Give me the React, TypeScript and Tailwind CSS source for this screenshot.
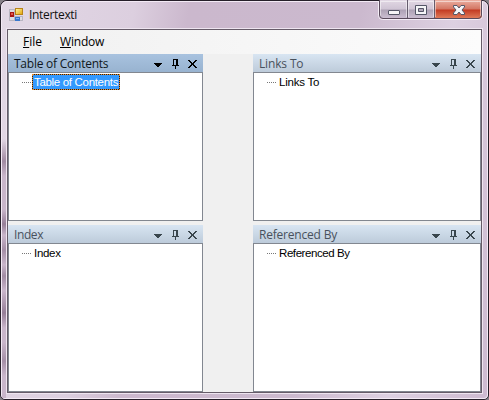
import React from "react";

type PaneProps = { title: string; node: string; active?: boolean; titleStyle: string; nodeStyle: string };

function PaneIcons({ active }: { active?: boolean }) {
  return (
    <svg width="45" height="18" viewBox="0 0 45 18" shapeRendering="crispEdges" className={active ? "text-black" : "text-[#39464d]"} fill="currentColor">
      <path d="M0 9h8v1H0zM1 10h6v1H1zM2 11h4v1H2zM3 12h2v1H3z" />
      <path d="M19 5h5v1h-5zM19 5h1v6h-1zM22 5h2v6h-2zM18 11h7v1h-7zM21 12h1v3h-1z" />
      <path d="M34 6h2v1h-2zM41 6h2v1h-2zM35 7h2v1h-2zM40 7h2v1h-2zM36 8h2v1h-2zM39 8h2v1h-2zM37 9h3v2h-3zM36 11h2v1h-2zM39 11h2v1h-2zM35 12h2v1h-2zM40 12h2v1h-2zM34 13h2v1h-2zM41 13h2v1h-2z" />
    </svg>
  );
}

function Pane({ title, node, active, titleStyle, nodeStyle }: PaneProps) {
  return (
    <section className="flex min-h-0 flex-1 flex-col">
      <header className={`flex h-[18px] shrink-0 items-center justify-between pl-1.5 pr-1 ${active ? "bg-linear-to-b from-[#a8c2df] to-[#98b3d0] text-[#101820]" : "bg-linear-to-b from-[#d8e5f2] to-[#bdcbda] text-[#48515d]"}`}>
        <span className={`whitespace-nowrap text-[12px] leading-[19px] ${titleStyle}`}>{title}</span>
        <PaneIcons active={active} />
      </header>
      <div className="flex flex-1 items-start border border-[#828790] bg-white pl-[13px] pt-px">
        <span className="mt-2 h-px w-[10px] bg-[repeating-linear-gradient(90deg,#777_0px,#777_1px,transparent_1px,transparent_2px)]" />
        <span className={`h-4 whitespace-nowrap border border-dotted px-px font-['Liberation_Sans',Arial,sans-serif] text-[11.5px] leading-[15px] ${nodeStyle} ${active ? "w-[88px] border-[#e58a2c] text-white [background:linear-gradient(#3399ff,#3399ff)_padding-box,linear-gradient(#222,#222)_border-box]" : "border-transparent text-black"}`}>{node}</span>
      </div>
    </section>
  );
}

function AppIcon() {
  return (
    <svg width="15" height="15" viewBox="0 0 15 15" shapeRendering="crispEdges">
      <defs>
        <linearGradient id="gold" x2="1" y2="1"><stop stopColor="#fff3a0" /><stop offset="1" stopColor="#e3a80e" /></linearGradient>
      </defs>
      <path d="M.5 2.5h5v11h-5zM5.500 9.500h8v4h-8z" fill="#dedce2" stroke="#b9b6c2" />
      <rect x="1" y="5" width="4" height="5" fill="#a91714" />
      <rect x="2" y="6" width="2" height="2" fill="#e15b49" />
      <rect x="6" y="1" width="8" height="7" fill="#b98317" />
      <rect x="7" y="2" width="6" height="5" fill="url(#gold)" />
      <rect x="6" y="10" width="5" height="4" fill="#3978cd" />
      <rect x="7" y="11" width="3" height="1" fill="#81b2f0" />
    </svg>
  );
}

function WindowButtons() {
  return (
    <svg width="105" height="21" viewBox="0 0 105 21">
      <defs>
        <linearGradient id="glass" x2="0" y2="1"><stop stopColor="#e2d8e4" /><stop offset=".48" stopColor="#cfc4d4" /><stop offset=".52" stopColor="#ada1b4" /><stop offset="1" stopColor="#cfc1d5" /></linearGradient>
        <linearGradient id="close" x2="0" y2="1"><stop stopColor="#ebb0a2" /><stop offset=".48" stopColor="#d37562" /><stop offset=".52" stopColor="#c23a22" /><stop offset="1" stopColor="#e3825f" /></linearGradient>
        <clipPath id="rounded"><path d="M1 0h103v15q0 4-4 4H5q-4 0-4-4z" /></clipPath>
      </defs>
      <path d="M.5 1v14.500q0 4 4 4h96q4 0 4-4V1" fill="none" stroke="#f4edf6" />
      <g clipPath="url(#rounded)">
        <path d="M1 0h56v19H1z" fill="url(#glass)" />
        <path d="M57 0h47v19H57z" fill="url(#close)" />
        <path d="M2.500 16V1.500h26V17M30.500 17V1.500h25V17M57.500 17V1.500h45V16" fill="none" stroke="#fff" strokeOpacity=".5" />
        <path d="M29.500 0v19M56.500 0v19" stroke="#655b6c" />
      </g>
      <path d="M1.500 0v15q0 3.500 3.500 3.500h95q3.500 0 3.500-3.500V0" fill="none" stroke="#5a4b5c" />
      <rect x="10.500" y="10.500" width="11" height="4" rx=".5" fill="#f5f5f7" stroke="#545667" />
      <path d="M37.500 5.500h11v9h-11z" fill="#f5f5f7" stroke="#545667" />
      <path d="M40.500 8.500h5v3h-5z" fill="#b3a8ba" stroke="#545667" />
      <path d="M75.500 5.500h3.500l2 2.500 2-2.500h3.500v1.500l-2.500 3 2.500 3v1.500h-3.500l-2-2.500-2 2.500h-3.500V13l2.500-3-2.500-3z" fill="#f5f5f7" stroke="#545667" strokeLinejoin="round" />
    </svg>
  );
}

export default function App() {
  return (
    <div className="h-[400px] w-[489px] overflow-hidden bg-[#858087] font-['Open_Sans',sans-serif] text-[12px]">
      <main className="flex h-full flex-col rounded-t-[7px] rounded-b-[5px] border border-[#261f29] bg-[#cbb9ce]">
        <div className="flex min-h-0 flex-1 flex-col rounded-t-[6px] rounded-b-[4px] border border-[#f3eaf5] bg-[linear-gradient(100deg,#e2d8e5_0%,#dccfdf_24%,#cbb8cd_34%,#cbb9ce_65%,#ddd0e1_82%,#cdbad0_100%)]">
          <div className="flex h-[26px] shrink-0 items-start justify-between pl-[7px] pr-1">
            <div className="flex pt-[5px]">
              <AppIcon />
              <h1 className="ml-[5px] text-[12px] leading-4 tracking-[-0.32px] text-[#111]">Intertexti</h1>
            </div>
            <div className="-mt-0.5 h-[21px]"><WindowButtons /></div>
          </div>
          <div className="flex min-h-0 flex-1 bg-[linear-gradient(180deg,transparent_0%,transparent_30%,#a18ba2_36%,#c9b6cb_40%,#c9b6cb_49%,#967f98_53%,#c9b6cb_56%,#a58fa7_60%,#c9b6cb_64%,#a28ca4_67%,#c9b6cb_71%,#967f98_77%,#c9b6cb_81%,#c9b6cb_85%,#a58fa7_90%,#c9b6cb_94%)] bg-[length:4px_100%] bg-no-repeat px-1 pb-1">
            <div className="flex min-w-0 flex-1 border border-[#eee5f0]">
              <div className="flex min-w-0 flex-1 flex-col border border-[#655b68] bg-[#f0f0f0]">
                <nav className="flex h-6 shrink-0 items-center bg-linear-to-r from-[#f0f0f0] to-[#fcfcfc] pl-[15px] text-[12px] leading-6 text-black">
                  <span className="w-[37px]"><u className="underline-offset-1">F</u>ile</span>
                  <span className="tracking-[-0.2px]"><u className="underline-offset-1">W</u>indow</span>
                </nav>
                <div className="flex min-h-0 flex-1 justify-between">
                  <div className="flex w-[195px] flex-col">
                    <div className="flex h-[167px] shrink-0"><Pane title="Table of Contents" node="Table of Contents" active titleStyle="tracking-[-0.24px]" nodeStyle="tracking-[-0.32px]" /></div>
                    <div className="h-1 shrink-0 bg-[#f0f0f0]" />
                    <Pane title="Index" node="Index" titleStyle="tracking-[-0.4px]" nodeStyle="tracking-[-0.3px]" />
                  </div>
                  <div className="flex w-[228px] flex-col">
                    <div className="flex h-[167px] shrink-0"><Pane title="Links To" node="Links To" titleStyle="tracking-[-0.15px]" nodeStyle="tracking-[-0.22px]" /></div>
                    <div className="h-1 shrink-0 bg-[#f0f0f0]" />
                    <Pane title="Referenced By" node="Referenced By" titleStyle="tracking-[-0.2px]" nodeStyle="tracking-[-0.42px]" />
                  </div>
                </div>
              </div>
            </div>
          </div>
        </div>
      </main>
    </div>
  );
}
